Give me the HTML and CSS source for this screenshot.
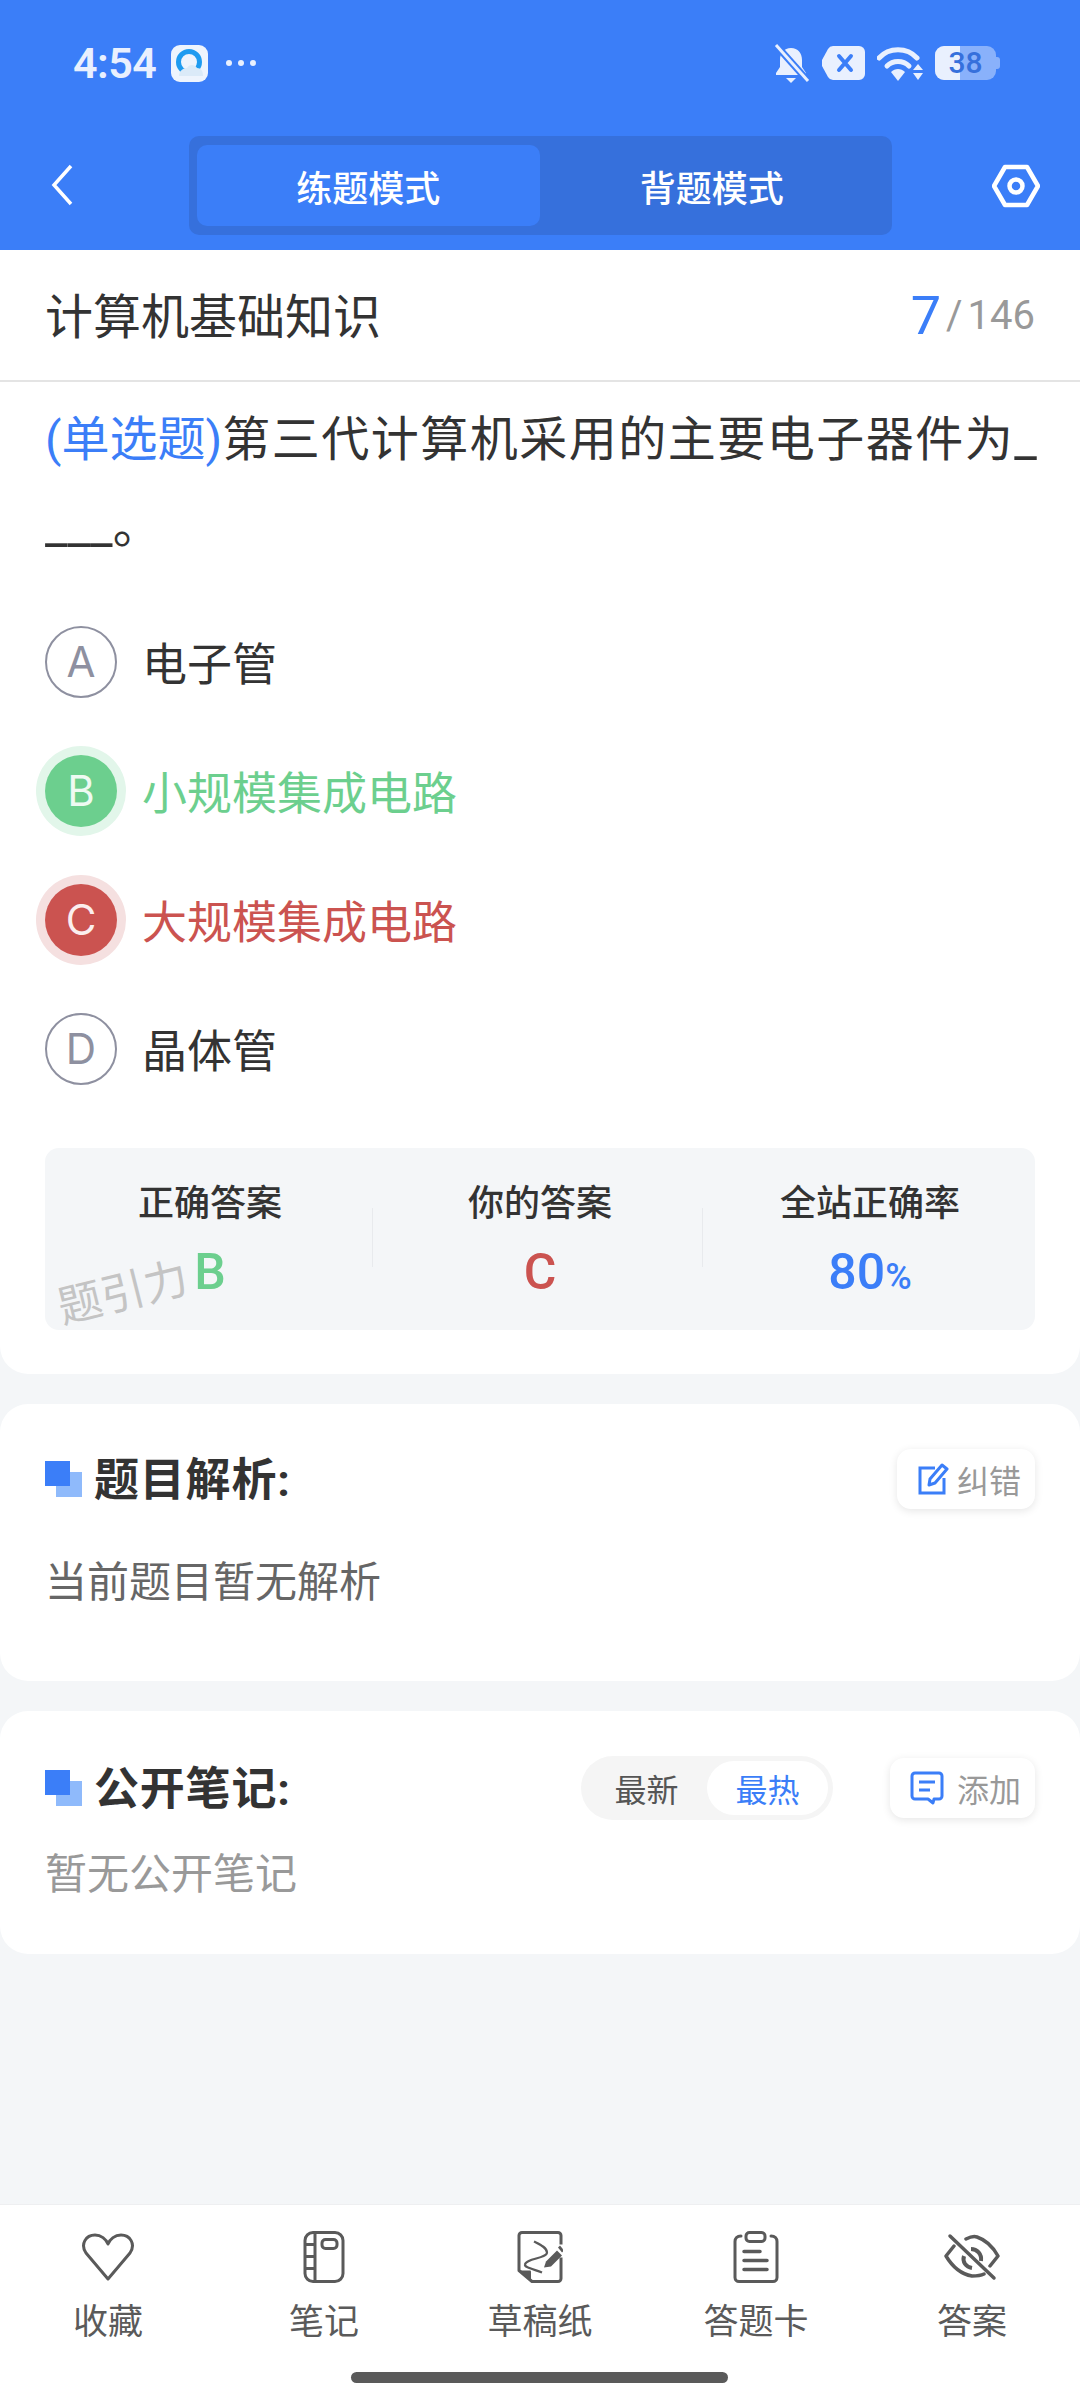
FILE: index.html
```html
<!DOCTYPE html>
<html lang="zh">
<head>
    <meta charset="UTF-8">
    <meta name="viewport" content="width=device-width, initial-scale=1.0">
    <title>练题模式</title>
    <link rel="stylesheet" href="styles.css">
</head>
<body>
    <header class="top">
        <div class="status">
            <div class="status-left">
                <span class="time">4:54</span>
                <svg class="app-icon" viewBox="0 0 37 37">
                    <rect width="37" height="37" rx="9" fill="#eef4fd"/>
                    <circle cx="18" cy="17" r="10.5" fill="none" stroke="#1f9bf0" stroke-width="5"/>
                    <path d="M8 31c0-5 4-8 8-8 2-4 8-4 10 0 4 0 6 3 6 8z" fill="#dbeaf8"/>
                </svg>
                <span class="dots"><i></i><i></i><i></i></span>
            </div>
            <div class="status-right">
                <svg class="st-bell" viewBox="0 0 37 39">
                    <path d="M18 4c7 0 11 5 11 12v7l4 6v2H3v-2l4-6v-7c0-7 4-12 11-12z" fill="#e9f0fe"/>
                    <path d="M13 34h10l-5 5z" fill="#e9f0fe"/>
                    <path d="M2 0 35 37" stroke="#3b7ef8" stroke-width="7"/>
                    <path d="M3 1 35 37" stroke="#e9f0fe" stroke-width="3"/>
                </svg>
                <svg class="st-x" viewBox="0 0 43 34">
                    <path d="M11 0h26a6 6 0 0 1 6 6v22a6 6 0 0 1-6 6H11a6 6 0 0 1-5-3L0 20v-6l6-11a6 6 0 0 1 5-3z" fill="#e9f0fe"/>
                    <path d="M17 10 29 24M29 10 17 24" stroke="#3b7ef8" stroke-width="4" stroke-linecap="round"/>
                </svg>
                <svg class="st-wifi" viewBox="0 0 47 35">
                    <path d="M2 12c10-11 28-11 38 0" fill="none" stroke="#e9f0fe" stroke-width="5" stroke-linecap="round"/>
                    <path d="M10 20c6-6 16-6 22 0" fill="none" stroke="#e9f0fe" stroke-width="5" stroke-linecap="round"/>
                    <path d="M14 26c4-4 10-4 14 0l-7 9z" fill="#e9f0fe"/>
                    <path d="M41 18l5 6H36zM36 27h10l-5 7z" fill="#e9f0fe"/>
                </svg>
                <div class="battery">
                    <span class="battery-fill"></span>
                    <span class="battery-num">38</span>
                </div>
            </div>
        </div>
        <nav class="nav">
            <svg class="back" viewBox="0 0 22 42">
                <path d="M20 2 3 21l17 19" fill="none" stroke="#fff" stroke-width="3.5"/>
            </svg>
            <div class="mode-tabs">
                <div class="mode-tab active">练题模式</div>
                <div class="mode-tab">背题模式</div>
            </div>
            <svg class="hex" viewBox="0 0 48 44">
                <path d="M13 3h22l11 19-11 19H13L2 22z" fill="none" stroke="#fff" stroke-width="4.5" stroke-linejoin="round"/>
                <circle cx="24" cy="22" r="6.5" fill="none" stroke="#fff" stroke-width="4.5"/>
            </svg>
        </nav>
    </header>

    <main class="content">
        <section class="card question-card">
            <div class="title-row">
                <span class="subject">计算机基础知识</span>
                <span class="progress"><b>7</b><i>/</i>146</span>
            </div>
            <p class="question"><span class="q-type">(单选题)</span>第三代计算机采用的主要电子器件为<span class="blank">_</span><span class="blank">___</span>。</p>

            <ul class="options">
                <li class="option"><span class="letter">A</span>电子管</li>
                <li class="option right"><span class="letter">B</span>小规模集成电路</li>
                <li class="option wrong"><span class="letter">C</span>大规模集成电路</li>
                <li class="option"><span class="letter">D</span>晶体管</li>
            </ul>

            <div class="stats">
                <div class="stat">
                    <div class="stat-label">正确答案</div>
                    <div class="stat-val green">B</div>
                </div>
                <div class="stat">
                    <div class="stat-label">你的答案</div>
                    <div class="stat-val red">C</div>
                </div>
                <div class="stat">
                    <div class="stat-label">全站正确率</div>
                    <div class="stat-val blue">80<small>%</small></div>
                </div>
                <span class="watermark">题引力</span>
            </div>
        </section>

        <section class="card analysis-card">
            <div class="sec-head">
                <h2 class="sec-title"><span class="mark"></span><span class="sec-text">题目解析:</span></h2>
                <div class="mini-btn">
                    <svg viewBox="0 0 30 32">
                        <path d="M17 5H2v25h24V15" fill="none" stroke="#3b7ef8" stroke-width="3"/>
                        <path d="M11 22l1-6L24 2l5 4-12 14z" fill="none" stroke="#3b7ef8" stroke-width="3" stroke-linejoin="round"/>
                    </svg>
                    <span>纠错</span>
                </div>
            </div>
            <p class="analysis-text">当前题目暂无解析</p>
        </section>

        <section class="card notes-card">
            <div class="sec-head">
                <h2 class="sec-title"><span class="mark"></span><span class="sec-text">公开笔记:</span></h2>
                <div class="note-tools">
                    <div class="sort">
                        <span class="sort-item">最新</span>
                        <span class="sort-item active">最热</span>
                    </div>
                    <div class="mini-btn wide">
                        <svg viewBox="0 0 34 34">
                            <path d="M5 2h24a3 3 0 0 1 3 3v20a3 3 0 0 1-3 3h-5l-1 4-5-4H5a3 3 0 0 1-3-3V5a3 3 0 0 1 3-3z" fill="none" stroke="#3b7ef8" stroke-width="3" stroke-linejoin="round"/>
                            <path d="M9 11h16M9 19h11" stroke="#3b7ef8" stroke-width="3"/>
                        </svg>
                        <span>添加</span>
                    </div>
                </div>
            </div>
            <p class="notes-empty">暂无公开笔记</p>
        </section>
    </main>

    <footer class="bottom">
        <div class="tools">
            <div class="tool">
                <svg viewBox="0 0 54 48" width="54" height="48">
                    <path d="M27 46 5 20C-1 11 5 2 14 2c6 0 11 4 13 9 2-5 7-9 13-9 9 0 15 9 9 18z" fill="none" stroke="#5a5a5a" stroke-width="3" stroke-linejoin="round"/>
                </svg>
                <span>收藏</span>
            </div>
            <div class="tool">
                <svg viewBox="0 0 42 53" width="42" height="53">
                    <rect x="2" y="2" width="38" height="49" rx="8" fill="none" stroke="#5a5a5a" stroke-width="3"/>
                    <path d="M12 2v49M2 14h10M2 26h10M2 38h10" stroke="#5a5a5a" stroke-width="3"/>
                    <rect x="19" y="9" width="15" height="9" rx="3.5" fill="none" stroke="#5a5a5a" stroke-width="3"/>
                </svg>
                <span>笔记</span>
            </div>
            <div class="tool">
                <svg viewBox="0 0 46 53" width="46" height="53">
                    <path d="M44 14V5a3 3 0 0 0-3-3H5a3 3 0 0 0-3 3v35l13 11h26a3 3 0 0 0 3-3V27" fill="none" stroke="#5a5a5a" stroke-width="3" stroke-linejoin="round"/>
                    <path d="M2 40h11a1 1 0 0 1 1 1v10z" fill="#5a5a5a"/>
                    <path d="M17 11c6 3 13 6 13 11 0 6-21 6-22 12-1 3 10 5 17 8" fill="none" stroke="#5a5a5a" stroke-width="2.2"/>
                    <path d="M27 37 29 31 40 20 45 25 34 36z" fill="#5a5a5a"/>
                    <path d="M41 17 43 15 47 20 45 22z" fill="#5a5a5a"/>
                </svg>
                <span>草稿纸</span>
            </div>
            <div class="tool">
                <svg viewBox="0 0 46 53" width="46" height="53">
                    <path d="M8 5.500C4 5.500 2 8 2 11v36a4 4 0 0 0 4 4h34a4 4 0 0 0 4-4V11c0-3-2-5.500-6-5.500" fill="none" stroke="#5a5a5a" stroke-width="3" stroke-linecap="round"/>
                    <rect x="13" y="2" width="19" height="9" rx="3.5" fill="none" stroke="#5a5a5a" stroke-width="3"/>
                    <path d="M11 21h16M11 30h23M11 39h23" stroke="#5a5a5a" stroke-width="3.500" stroke-linecap="round"/>
                </svg>
                <span>答题卡</span>
            </div>
            <div class="tool">
                <svg viewBox="0 0 56 46" width="56" height="46">
                    <path d="M10 12 2 22c6 10 14 18 26 20 4 0 8 0 12-2M22 5c4-2 8-3 11-2 9 3 16 10 21 19l-8 10" fill="none" stroke="#5a5a5a" stroke-width="3.500" stroke-linecap="round" stroke-linejoin="round"/>
                    <path d="M20 22c-2 6 2 11 8 12M27 15c6 0 11 5 10 12" fill="none" stroke="#5a5a5a" stroke-width="4"/>
                    <path d="M6 2 50 44" stroke="#5a5a5a" stroke-width="3.500" stroke-linecap="round"/>
                </svg>
                <span>答案</span>
            </div>
        </div>
        <div class="home-bar"></div>
    </footer>
</body>
</html>
```

FILE: styles.css
```css
* {
    margin: 0;
    padding: 0;
    box-sizing: border-box;
    font-family: Roboto, 'Noto Sans CJK SC', sans-serif;
}

body {
    width: 1080px;
    height: 2400px;
    background: #f4f6f8;
    display: flex;
    flex-direction: column;
    overflow: hidden;
    color: #333;
}

ul {
    list-style: none;
}

/* 顶部 */
.top {
    height: 250px;
    background: #3b7ef8;
    flex-shrink: 0;
}

.status {
    height: 126px;
    padding: 0 80px 0 73px;
    margin-bottom: 10px;
    display: flex;
    justify-content: space-between;
    align-items: center;
}

.status-left,
.status-right {
    display: flex;
    align-items: center;
}

.time {
    color: #e9f0fe;
    font-size: 43px;
    font-weight: 600;
    letter-spacing: -0.5px;
}

.app-icon {
    width: 37px;
    height: 37px;
    margin-left: 15px;
}

.dots {
    display: flex;
    gap: 6px;
    margin-left: 18px;
}

.dots i {
    width: 6px;
    height: 6px;
    background: #e9f0fe;
    border-radius: 50%;
}

.st-bell {
    width: 37px;
    height: 39px;
}

.st-x {
    width: 43px;
    height: 34px;
    margin-left: 12px;
}

.st-wifi {
    width: 47px;
    height: 35px;
    margin-left: 12px;
}

.battery {
    width: 61px;
    height: 34px;
    margin: 0 4px 0 11px;
    background: rgba(233, 240, 254, 0.45);
    border-radius: 9px;
    position: relative;
    display: flex;
    justify-content: center;
    align-items: center;
}

.battery::after {
    content: '';
    position: absolute;
    right: -4px;
    top: 11px;
    width: 4px;
    height: 12px;
    background: rgba(233, 240, 254, 0.45);
    border-radius: 0 3px 3px 0;
}

.battery-fill {
    position: absolute;
    left: 0;
    top: 0;
    bottom: 0;
    width: 25px;
    background: #e9f0fe;
    border-radius: 9px 0 0 9px;
}

.battery-num {
    position: relative;
    color: #3670dc;
    font-size: 30px;
    line-height: 34px;
    font-weight: 500;
}

.nav {
    height: 100px;
    position: relative;
    display: flex;
    justify-content: center;
}

.back {
    position: absolute;
    left: 51px;
    top: 28px;
    width: 22px;
    height: 42px;
}

.hex {
    position: absolute;
    left: 992px;
    top: 28px;
    width: 48px;
    height: 44px;
}

.mode-tabs {
    width: 703px;
    height: 99px;
    padding: 9px 8px;
    background: #3670dc;
    border-radius: 10px;
    display: flex;
}

.mode-tab {
    flex: 1;
    display: flex;
    justify-content: center;
    align-items: center;
    color: #fff;
    font-size: 36px;
    font-weight: 500;
    border-radius: 10px;
}

.mode-tab.active {
    background: #3b7ef8;
}

/* 卡片 */
.content {
    flex: 1;
    display: flex;
    flex-direction: column;
    gap: 30px;
}

.card {
    background: #fff;
    border-radius: 28px;
}

.question-card {
    border-radius: 0 0 28px 28px;
    padding-bottom: 44px;
}

.title-row {
    height: 132px;
    padding: 0 45px;
    border-bottom: 2px solid #e4e4e4;
    display: flex;
    justify-content: space-between;
    align-items: center;
}

.subject {
    font-size: 48px;
    margin-top: -5px;
    color: #333;
}

.progress {
    font-size: 40px;
    color: #999;
    display: flex;
    align-items: center;
}

.progress b {
    color: #3b7ef8;
    font-size: 54px;
    font-weight: 400;
}

.progress i {
    font-style: normal;
    margin: 0 5px 0 5px;
}

.question {
    margin-top: 14px;
    padding: 0 42px 0 45px;
    font-size: 48px;
    line-height: 87px;
    letter-spacing: 1.5px;
    word-break: break-all;
    color: #333;
}

.q-type {
    color: #3b7ef8;
    letter-spacing: 0;
}

.blank {
    font-size: 50px;
    letter-spacing: 0;
}

.options {
    margin-top: 27px;
    padding: 0 45px;
}

.option {
    height: 129px;
    display: flex;
    align-items: center;
    font-size: 45px;
    color: #333;
}

.letter {
    width: 72px;
    height: 72px;
    margin-right: 25px;
    border: 2px solid #8e90a0;
    border-radius: 50%;
    color: #8e90a0;
    font-family: Inter, sans-serif;
    font-size: 42px;
    display: flex;
    justify-content: center;
    align-items: center;
    flex-shrink: 0;
}

.option.right {
    color: #6ccf8e;
}

.option.right .letter {
    background: #6ccf8e;
    border: none;
    color: #eefaf2;
    box-shadow: 0 0 0 9px #e2f6ea;
}

.option.wrong {
    color: #cb5350;
}

.option.wrong .letter {
    background: #cb5350;
    border: none;
    color: #fbeeee;
    box-shadow: 0 0 0 9px #f5e0e0;
}

.stats {
    margin: 35px 45px 0;
    height: 182px;
    padding-top: 33px;
    background: #f4f6f8;
    border-radius: 14px;
    display: flex;
    position: relative;
}

.stat {
    flex: 1;
    text-align: center;
    position: relative;
}

.stat + .stat::before {
    content: '';
    position: absolute;
    left: -3px;
    top: 27px;
    height: 59px;
    width: 1px;
    background: #e8eaed;
}

.stat-label {
    font-size: 36px;
    line-height: 46px;
    font-weight: 500;
    color: #333;
}

.stat-val {
    margin-top: 17px;
    font-size: 50px;
    line-height: 56px;
    font-weight: 500;
}

.stat-val small {
    font-size: 36px;
}

.green { color: #6ccf8e; }
.red { color: #cb5350; }
.blue { color: #3b7ef8; }

.watermark {
    position: absolute;
    left: 12px;
    top: 120px;
    font-size: 44px;
    line-height: 50px;
    color: #c4c4c4;
    transform: rotate(-14deg);
}

.analysis-card {
    height: 277px;
    padding: 45px 45px 0 45px;
}

.notes-card {
    height: 243px;
    padding: 47px 45px 0 45px;
}

.sec-head {
    height: 60px;
    display: flex;
    justify-content: space-between;
    align-items: center;
}

.sec-title {
    display: flex;
    align-items: center;
    font-size: 45px;
    font-weight: 700;
    color: #333;
}

.sec-text {
    margin-top: -5px;
    letter-spacing: 0.8px;
}

.mark {
    width: 37px;
    height: 36px;
    margin-right: 12px;
    position: relative;
    background: linear-gradient(#8fbafb, #8fbafb) right bottom / 26px 25px no-repeat;
}

.mark::before {
    content: '';
    position: absolute;
    left: 0;
    top: 0;
    width: 25px;
    height: 25px;
    background: #3b7ef8;
}

.mini-btn {
    width: 138px;
    height: 60px;
    padding-left: 20px;
    background: #fff;
    border-radius: 14px;
    box-shadow: 0 2px 8px rgba(0, 0, 0, 0.1);
    display: flex;
    align-items: center;
    color: #999;
    font-size: 32px;
}

.mini-btn svg {
    width: 32px;
    height: 32px;
    margin-right: 8px;
}

.mini-btn.wide {
    width: 145px;
}

.mini-btn.wide svg {
    width: 34px;
    height: 34px;
    margin-right: 13px;
}

.note-tools {
    display: flex;
    align-items: center;
    gap: 57px;
}

.sort {
    width: 252px;
    height: 64px;
    padding: 5px;
    background: #f5f5f5;
    border-radius: 32px;
    display: flex;
    justify-content: flex-end;
    align-items: center;
}

.sort-item {
    width: 121px;
    height: 54px;
    font-size: 32px;
    color: #555;
    display: flex;
    justify-content: center;
    align-items: center;
    border-radius: 27px;
}

.sort-item.active {
    background: #fff;
    color: #3b7ef8;
}

.analysis-text {
    margin-top: 46px;
    font-size: 42px;
    line-height: 56px;
    color: #666;
}

.notes-empty {
    margin-top: 29px;
    font-size: 42px;
    line-height: 56px;
    color: #999;
}

/* 底部 */
.bottom {
    height: 196px;
    flex-shrink: 0;
    background: #fff;
    border-top: 1px solid #eeeff1;
    position: relative;
}

.tools {
    display: grid;
    grid-template-columns: repeat(5, 216px);
}

.tool {
    height: 142px;
    padding-top: 25px;
    display: flex;
    flex-direction: column;
    align-items: center;
    color: #5a5a5a;
    font-size: 35px;
}

.tool svg {
    height: 54px;
    flex-shrink: 0;
}

.tool span {
    margin-top: 16px;
    line-height: 46px;
}

.home-bar {
    position: absolute;
    left: 351px;
    top: 167px;
    width: 377px;
    height: 11px;
    background: #5a5a5a;
    border-radius: 6px;
}
```
